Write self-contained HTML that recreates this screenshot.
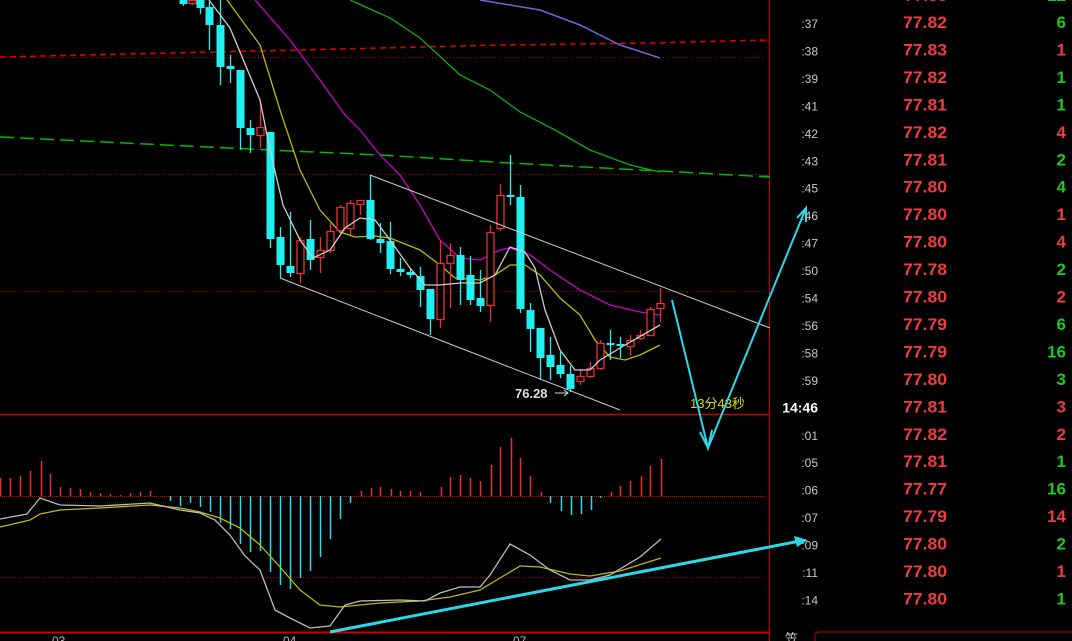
<!DOCTYPE html>
<html><head><meta charset="utf-8"><style>
html,body{margin:0;padding:0;background:#000;width:1072px;height:641px;overflow:hidden}
svg{display:block}
</style></head><body>
<svg id="s" width="1072" height="641" xmlns="http://www.w3.org/2000/svg" font-family="Liberation Sans, sans-serif">
<rect width="1072" height="641" fill="#000"/>
<!-- dotted red grid -->
<g stroke="#a00" stroke-width="1" stroke-dasharray="1,2">
<line x1="0" y1="57.5" x2="765" y2="57.5"/>
<line x1="0" y1="174.5" x2="765" y2="174.5"/>
<line x1="0" y1="291.5" x2="765" y2="291.5"/>
<line x1="0" y1="577.5" x2="765" y2="577.5"/>
</g>
<line x1="0" y1="496.5" x2="765" y2="496.5" stroke="#d00" stroke-dasharray="1,1"/>
<line x1="0" y1="414.5" x2="769" y2="414.5" stroke="#c00" stroke-width="1.5"/>
<line x1="0" y1="632.5" x2="769" y2="632.5" stroke="#c00" stroke-width="2"/>
<line x1="769.5" y1="0" x2="769.5" y2="641" stroke="#c00"/>
<line x1="760" y1="41" x2="769" y2="41" stroke="#c00"/>
<line x1="760" y1="176" x2="769" y2="176" stroke="#0c0"/>
<!-- dashed lines -->
<polyline fill="none" stroke="#d00" stroke-width="1.5" stroke-dasharray="6,4" points="0,57 170,53 300,50 500,45 650,43 765,40"/>
<polyline fill="none" stroke="#0b0" stroke-width="1.5" stroke-dasharray="14,6" points="0,137 270,150 380,155 510,163 660,171 770,177"/>
<!-- MAs -->
<polyline fill="none" stroke="#6a6ad8" stroke-width="1.5" points="480,0 540,10 580,25 620,45 660,58"/>
<polyline fill="none" stroke="#1a1" stroke-width="1.3" points="350,0 390,18 420,38 460,75 490,90 520,112 555,130 590,150 630,165 660,172"/>
<polyline fill="none" stroke="#c0c" stroke-width="1.3" points="255,0 290,40 320,80 345,115 360,130 380,155 400,175 420,205 440,240 460,258 480,260 500,250 510,248 530,255 550,270 580,290 610,305 640,312 660,315"/>
<polyline fill="none" stroke="#bb0" stroke-width="1.3" points="227,0 260,45 280,110 300,170 320,210 340,232 355,237 375,236 390,238 420,250 440,265 455,278 480,280 495,275 510,265 525,265 540,275 560,298 580,315 595,340 610,357 625,360 640,355 660,345"/>
<g id="candles"></g>
<polyline fill="none" stroke="#ccc" stroke-width="1.3" points="209,0 230,28 260,100 270,150 283,205 300,240 313,258 330,250 345,228 360,218 375,220 390,240 410,268 425,285 440,285 460,283 480,283 495,275 510,247 525,252 535,268 545,310 560,350 575,370 590,370 600,360 620,348 660,325"/>
<!-- channel -->
<line x1="370" y1="175" x2="770" y2="328" stroke="#ccc" stroke-width="1"/>
<line x1="280" y1="278" x2="620" y2="410" stroke="#ccc" stroke-width="1"/>
<text x="515" y="398" fill="#ddd" font-size="13" font-weight="bold">76.28</text>
<line x1="555" y1="393" x2="568" y2="393" stroke="#ddd"/><polyline points="564,390 568,393 564,396" fill="none" stroke="#ddd"/>
<text x="690" y="408" fill="#dd0" font-size="13" font-family="Liberation Sans, Noto Sans CJK SC, sans-serif">13分43秒</text>
<!-- MACD -->
<g id="hist"></g>
<polyline fill="none" stroke="#bb0" stroke-width="1.3" points="0,527 30,520 40,514 60,510 100,508 150,505 180,508 200,512 220,518 240,528 260,545 280,567 300,590 320,605 340,607 380,603 420,601 450,597 480,590 500,578 520,566 540,567 570,574 590,576 620,571 661,558"/>
<polyline fill="none" stroke="#bbb" stroke-width="1.3" points="0,519 27,514 40,498 60,505 100,506 150,503 180,510 200,513 215,520 230,535 245,556 260,570 275,610 290,618 310,628 330,626 345,605 360,601 400,600 425,601 440,593 460,587 480,587 490,575 510,544 530,555 550,570 570,580 590,580 610,575 640,557 661,539"/>
<!-- cyan arrows -->
<g stroke="#2cd8e8" fill="none" stroke-width="2">
<polyline points="672,300 708,448 806,208"/>
<polyline points="700,432 708,448 712,430"/>
<polyline points="797,218 806,208 806,222"/>
</g>
<line x1="330" y1="632" x2="800" y2="541" stroke="#2cd8e8" stroke-width="3"/>
<polygon points="808,540 794,536 797,547" fill="#2cd8e8"/>
<!-- axis labels -->
<g fill="#bbb" font-size="12"><text x="52" y="645">03</text><text x="283" y="645">04</text><text x="513" y="645">07</text></g>
<text x="785" y="643" fill="#ccc" font-size="13" font-family="Liberation Sans, Noto Sans CJK SC, sans-serif">笠</text>
<polyline points="815,641 815,634 818,632 1072,632" fill="none" stroke="#c00"/>
<g id="rows"></g>
</svg>
<script>
var NS="http://www.w3.org/2000/svg";
function el(p,t,a,txt){var e=document.createElementNS(NS,t);for(var k in a)e.setAttribute(k,a[k]);if(txt!=null)e.textContent=txt;p.appendChild(e);return e;}
var c=[ // x,open/bodyTop,bodyBot,wickTop,wickBot,color(r/c)
[183,0,4,-5,6,'c'],[192,0,3,-5,5,'r'],[200,0,8,-5,14,'c'],
[209,7,25,0,50,'c'],[220,25,67,0,85,'c'],[230,66,69,55,83,'c'],[240,70,128,70,150,'c'],[250,128,135,120,153,'c'],
[260,127,135,103,148,'r'],[270,132,239,132,248,'c'],[280,237,265,227,278,'c'],[290,266,273,212,277,'c'],[300,240,273,237,283,'r'],
[310,239,260,220,270,'c'],[320,250,257,237,273,'r'],[330,231,250,223,253,'r'],[340,207,230,205,232,'r'],[350,203,228,200,235,'r'],
[360,200,204,200,215,'r'],[370,200,239,175,240,'c'],[380,239,243,223,253,'c'],[390,241,269,222,274,'c'],[400,269,272,258,276,'c'],
[410,272,275,268,278,'c'],[420,276,290,267,307,'c'],[430,289,319,289,335,'c'],[440,263,319,240,328,'r'],[450,255,263,243,308,'r'],
[460,255,280,247,305,'c'],[470,275,300,256,305,'c'],[480,298,306,270,312,'c'],[490,232,305,225,322,'r'],[500,195,228,184,231,'r'],
[510,195,197,155,205,'c'],[520,197,309,185,313,'c'],[530,310,329,303,352,'c'],[540,328,358,328,380,'c'],[550,355,367,337,380,'c'],
[560,365,374,352,378,'c'],[570,374,389,366,392,'c'],[580,376,381,369,385,'r'],[590,368,376,362,378,'r'],[600,343,368,340,370,'r'],
[610,343,345,330,360,'c'],[620,344,346,337,358,'c'],[630,340,346,335,355,'r'],[640,335,338,330,340,'r'],[650,309,335,307,335,'r'],[660,303,308,288,322,'r']];
var g=document.getElementById('candles');
c.forEach(function(d){var x=d[0],col=d[5]=='r'?'#e83030':'#20f0f0';
el(g,'line',{x1:x+.5,y1:d[3],x2:x+.5,y2:d[4],stroke:col,'stroke-width':1.3});
var h=Math.max(d[2]-d[1],2);
if(d[5]=='r')el(g,'rect',{x:x-3,y:d[1]+.5,width:7,height:h,fill:'#000',stroke:col,'stroke-width':1.3});
else el(g,'rect',{x:x-3.5,y:d[1],width:8,height:h,fill:col});});
var hb=document.getElementById('hist');
var H=[[0,478],[10,478],[20,476],[30,471],[41,461],[50,474],[60,487],[70,488],[80,489],[90,492],[100,493],[110,494],[120,495],[130,493],[140,492],[150,491],
[170,501],[180,506],[190,503],[200,507],[210,512],[220,523],[230,529],[240,544],[250,552],[260,551],[270,572],[280,585],[290,589],[300,578],[310,571],[320,557],[330,539],[340,519],[350,503],
[361,491],[371,488],[380,487],[391,489],[400,491],[410,491],[420,492],[430,496],[441,487],[450,477],[460,475],[470,478],[480,481],[491,465],[500,447],[511,438],[520,458],[530,476],[541,492],
[550,503],[561,511],[571,515],[581,514],[591,510],[600,498],[611,492],[620,486],[630,481],[641,476],[650,466],[661,459]];
H.forEach(function(d){var col=d[1]<496?'#f03030':'#20e0f0';el(hb,'line',{x1:d[0]+.5,y1:496,x2:d[0]+.5,y2:d[1],stroke:col,'stroke-width':1.5});});
var R=[['37','77.82','6','g'],['38','77.83','1','r'],['39','77.82','1','g'],['41','77.81','1','g'],['42','77.82','4','r'],['43','77.81','2','g'],['45','77.80','4','g'],['46','77.80','1','r'],['47','77.80','4','r'],['50','77.78','2','g'],['54','77.80','2','r'],['56','77.79','6','g'],['58','77.79','16','g'],['59','77.80','3','g'],['14:46','77.81','3','r'],['01','77.82','2','r'],['05','77.81','1','g'],['06','77.77','16','g'],['07','77.79','14','r'],['09','77.80','2','g'],['11','77.80','1','r'],['14','77.80','1','g']];
var rg=document.getElementById('rows');
el(rg,'text',{x:947,y:1,fill:'#f03c3c','font-size':17,'font-weight':'bold','text-anchor':'end'},'77.83');
el(rg,'text',{x:1066,y:1,fill:'#1ec81e','font-size':17,'font-weight':'bold','text-anchor':'end'},'12');
R.forEach(function(r,i){var y=28+i*27.45;
if(r[0].length>2)el(rg,'text',{x:818,y:y,fill:'#fff','font-size':14,'font-weight':'bold','text-anchor':'end'},r[0]);
else el(rg,'text',{x:818,y:y,fill:'#c8c8c8','font-size':12,'text-anchor':'end'},':'+r[0]);
el(rg,'text',{x:903,y:y,fill:'#f03c3c','font-size':17,'font-weight':'bold',textLength:44,lengthAdjust:'spacingAndGlyphs'},r[1]);
el(rg,'text',{x:1066,y:y,fill:r[3]=='g'?'#1ec81e':'#f03c3c','font-size':17,'font-weight':'bold','text-anchor':'end'},r[2]);});
</script>
</body></html>
